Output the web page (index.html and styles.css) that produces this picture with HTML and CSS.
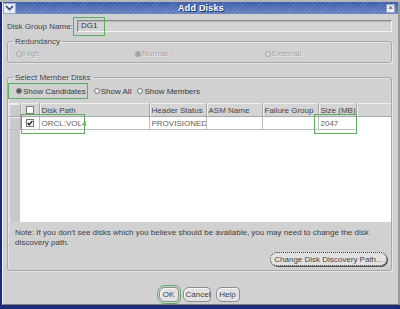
FILE: index.html
```html
<!DOCTYPE html>
<html lang="en">
<head>
  <meta charset="UTF-8" />
  <title>Add Disks</title>
  <link rel="stylesheet" href="styles.css">
</head>
<body>
  <div class="dialog">
    <div class="titlebar">
      <span class="tb-btn menu">
        <svg width="9" height="6" viewBox="0 0 9 6"><path d="M1 1 L4.5 4.5 L8 1" fill="none" stroke="#2b4784" stroke-width="1.6"/></svg>
      </span>
      <span class="title">Add Disks</span>
      <span class="tb-btn close">×</span>
    </div>

    <div class="content">
      <div class="name-row">
        <label for="dgname">Disk Group Name:</label>
        <div class="field" id="dgname">DG1</div>
        <span class="mark mark-name"></span>
      </div>

      <fieldset class="group redundancy">
        <legend>Redundancy</legend>
        <div class="radios disabled">
          <span class="opt opt-high"><i class="radio"></i>High</span>
          <span class="opt opt-normal"><i class="radio on"></i>Normal</span>
          <span class="opt"><i class="radio"></i>External</span>
        </div>
      </fieldset>

      <fieldset class="group member">
        <legend>Select Member Disks</legend>
        <div class="radios show">
          <span class="opt marked"><i class="radio on"></i>Show Candidates</span>
          <span class="opt"><i class="radio"></i>Show All</span>
          <span class="opt"><i class="radio"></i>Show Members</span>
        </div>

        <div class="grid">
          <table>
            <colgroup>
              <col style="width:11px"><col style="width:19px"><col style="width:110px"><col style="width:57px">
              <col style="width:56px"><col style="width:56px"><col style="width:38px"><col>
            </colgroup>
            <thead>
              <tr>
                <th class="rowhdr"></th>
                <th class="chk"><i class="box"></i></th>
                <th>Disk Path</th>
                <th>Header Status</th>
                <th>ASM Name</th>
                <th>Failure Group</th>
                <th>Size (MB)</th>
                <th class="filler"></th>
              </tr>
            </thead>
            <tbody>
              <tr>
                <td class="rowhdr"></td>
                <td class="chk">
                  <i class="box checked">
                    <svg width="7" height="6" viewBox="0 0 7 6"><path d="M0.8 3 L2.6 5 L6.2 0.8" fill="none" stroke="#111" stroke-width="1.5"/></svg>
                  </i>
                </td>
                <td>ORCL:VOL4</td>
                <td>PROVISIONED</td>
                <td></td>
                <td></td>
                <td>2047</td>
                <td class="filler"></td>
              </tr>
            </tbody>
          </table>
          <span class="mark mark-path"></span>
          <span class="mark mark-size"></span>
        </div>

        <p class="note">Note: If you don't see disks which you believe should be available, you may need to change the disk discovery path.</p>

        <div class="change-row">
          <button class="btn change">Change Disk Discovery Path...</button>
        </div>
      </fieldset>
    </div>

    <div class="actions">
      <button class="btn ok">OK</button>
      <button class="btn cancel">Cancel</button>
      <button class="btn help">Help</button>
    </div>
  </div>
</body>
</html>
```

FILE: styles.css
```css
html, body {
  margin: 0;
  padding: 0;
}

*, *::before, *::after {
  box-sizing: border-box;
}

body {
  width: 400px;
  height: 309px;
  overflow: hidden;
  background: linear-gradient(#b8b8b8 0 2px, #1d2b78 2px);
  font-family: 'Liberation Sans', Arial, sans-serif;
  font-size: 8px;
  color: #3a3a3a;
}

.dialog {
  margin: 2px 0 0 2px;
  height: 303px;
  background: #d1d1d1;
  border-left: 1px solid #f2f2f2;
  border-right: 2px solid #9a9a9a;
  border-bottom: 1px solid #7c7c7c;
  display: flex;
  flex-direction: column;
}

/* title bar */
.titlebar {
  height: 12px;
  display: grid;
  grid-template-columns: 13px 1fr 12px;
  align-items: center;
  background:
    repeating-linear-gradient(135deg, rgba(255,255,255,0.10) 0 1px, transparent 1px 3px),
    linear-gradient(#3c5ca6, #6784c2);
  color: white;
}

.title {
  text-align: center;
  font-weight: bold;
  font-size: 9px;
  text-shadow: 1px 1px 0 #1c2c5c;
  letter-spacing: 0.2px;
}

.tb-btn {
  display: flex;
  align-items: center;
  justify-content: center;
  height: 11px;
  background: #e9edf5;
  border: 1px solid #9aa8c8;
}

.tb-btn.close {
  width: 9px;
  height: 9px;
  color: #333;
  font-size: 8px;
  line-height: 1;
}

/* content */
.content {
  padding: 0 6px 0 4px;
}

.name-row {
  position: relative;
  display: flex;
  align-items: center;
  margin-top: 6px;
  height: 12px;
}

.name-row label {
  width: 70px;
  color: #444;
}

.field {
  flex: 1;
  height: 12px;
  padding-left: 3px;
  line-height: 10px;
  background: #d3d3d3;
  border: 1px solid;
  border-color: #8a8a8a #f3f3f3 #f3f3f3 #8a8a8a;
  box-shadow: inset 1px 1px 0 #b5b5b5;
  color: #333;
}

.mark {
  position: absolute;
  border: 1px solid #5fae5f;
  pointer-events: none;
}

.mark-name {
  left: 66px;
  top: -3px;
  width: 32px;
  height: 19px;
}

/* group boxes */
.group {
  margin: 5px 0 0;
  padding: 0;
  border: 1px solid #a7a7a7;
  border-radius: 3px;
  box-shadow: inset 1px 1px 0 #e4e4e4, 1px 1px 0 #e4e4e4;
}

.group legend {
  margin-left: 5px;
  padding: 0 2px;
  line-height: 9px;
  color: #444;
}

.radios {
  display: flex;
  align-items: center;
}

.opt {
  display: flex;
  align-items: center;
  gap: 1px;
}

.radio {
  display: inline-block;
  width: 6px;
  height: 6px;
  border-radius: 50%;
  border: 1px solid #777;
  background: #f4f4f4;
  position: relative;
}

.radio.on {
  background: #222;
  box-shadow: inset 0 0 0 1px #888;
}

.redundancy .radios {
  padding: 2px 0 3px 8px;
  height: 16px;
}

.disabled .opt {
  color: #a3a3a3;
  text-shadow: 1px 1px 0 #ececec;
}

.disabled .radio {
  border-color: #a6a6a6;
  background: #d8d8d8;
}

.disabled .radio.on {
  background: #8f8f8f;
  box-shadow: inset 0 0 0 1px #b8b8b8;
}

.opt-high {
  width: 119px;
}

.opt-normal {
  width: 130px;
}

.member {
  margin-top: 10px;
  padding-bottom: 4px;
}

.show {
  margin-top: 1px;
  gap: 6px;
}

.show .opt.marked {
  height: 16px;
  padding: 0 1px 0 7px;
  border: 1px solid #5fae5f;
}

/* disk table */
.grid {
  position: relative;
  margin: 4px 0 0 1px;
  height: 119px;
  background: linear-gradient(90deg, #e2e2e2 0 1px, #c9c9c9 1px 11px, #ffffff 11px);
}

table {
  width: 100%;
  border-collapse: collapse;
  table-layout: fixed;
}

th, td {
  height: 13px;
  padding: 0 0 0 2px;
  text-align: left;
  font-weight: normal;
  white-space: nowrap;
  overflow: hidden;
}

th {
  background: #d4d4d4;
  color: #444;
  border-top: 1px solid #f0f0f0;
  border-bottom: 1px solid #a8a8a8;
  border-right: 1px solid #a8a8a8;
  box-shadow: inset 1px 0 0 #efefef;
}

td {
  background: white;
  color: #5e5e5e;
  border-right: 1px solid #bdbdbd;
  border-bottom: 1px solid #bdbdbd;
}

th.filler {
  border-right: none;
}

td.filler {
  border: none;
}

.rowhdr,
td.rowhdr {
  background: #cacaca;
  border-right: 1px solid #a8a8a8;
  box-shadow: inset 1px 1px 0 #ececec;
}

.chk {
  padding-left: 5px;
}

.box {
  display: flex;
  align-items: center;
  justify-content: center;
  width: 8px;
  height: 8px;
  border: 1px solid #777;
  background: white;
}

.box.checked {
  background: #f4f4f4;
}

.mark-path {
  left: 12px;
  top: 11px;
  width: 64px;
  height: 20px;
}

.mark-size {
  left: 305px;
  top: 11px;
  width: 43px;
  height: 20px;
}

.note {
  margin: 6px 0 0 7px;
  line-height: 10px;
  color: #404040;
}

.change-row {
  display: flex;
  justify-content: flex-end;
  padding-right: 4px;
  margin-top: 4px;
}

/* buttons */
.btn {
  font-family: inherit;
  font-size: 8px;
  color: #444;
  height: 15px;
  padding: 0 2px;
  background: #e2e2e2;
  border: 1px solid #8c8c8c;
  border-radius: 6px 4px 4px 6px;
  box-shadow: inset 1px 1px 0 #f6f6f6;
}

.btn.change {
  height: 14px;
  width: 117px;
  border-radius: 7px;
  border: 1px dotted #444;
  box-shadow: 1px 1px 0 #555;
}

.actions {
  display: flex;
  justify-content: center;
  gap: 4px;
  margin-top: 16px;
  padding-right: 3px;
}

.btn.ok {
  width: 20px;
  outline: 1px solid #5fae5f;
  outline-offset: 1px;
}

.btn.cancel {
  width: 28px;
}

.btn.help {
  width: 24px;
  margin-left: 1px;
}
```
